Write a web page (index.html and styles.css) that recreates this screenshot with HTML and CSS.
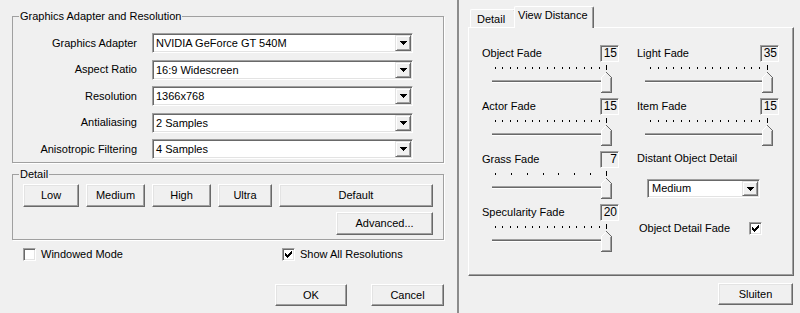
FILE: index.html
```html
<!DOCTYPE html>
<html lang="en">
<head>
<meta charset="utf-8">
<title>Graphics Settings</title>
<link rel="stylesheet" href="styles.css">
</head>
<body>
<svg class="defs" aria-hidden="true">
  <defs>
    <symbol id="thumb" viewBox="0 0 11 21">
      <path d="M0.5 5.5L5.5 0.5L10.5 5.5V20.5H0.5Z" fill="#f0f0f0"/>
      <path d="M0.5 20V5.5L5 1" stroke="#fff" fill="none"/>
      <path d="M5.5 0.5L10.5 5.5V20.5H0" stroke="#696969" fill="none"/>
      <path d="M9.5 6V19.5H1" stroke="#a0a0a0" fill="none"/>
    </symbol>
    <symbol id="arrow" viewBox="0 0 7 4">
      <path d="M0 0h7v1H0zM1 1h5v1H1zM2 2h3v1H2zM3 3h1v1H3z" fill="#000"/>
    </symbol>
    <symbol id="check" viewBox="0 0 7 7">
      <path d="M6 0h1v1H6zM5 1h2v1H5zM0 2h1v1H0zM4 2h3v1H4zM0 3h2v1H0zM3 3h3v1H3zM0 4h5v1H0zM1 5h3v1H1zM2 6h1v1H2z" fill="#000"/>
    </symbol>
  </defs>
</svg>

<div class="left">
  <fieldset class="group g1">
    <legend>Graphics Adapter and Resolution</legend>
    <div class="form">
      <span class="lbl">Graphics Adapter</span>
      <div class="combo"><span class="ctext">NVIDIA GeForce GT 540M</span><span class="drop"><svg width="7" height="4"><use href="#arrow"/></svg></span></div>
      <span class="lbl">Aspect Ratio</span>
      <div class="combo"><span class="ctext">16:9 Widescreen</span><span class="drop"><svg width="7" height="4"><use href="#arrow"/></svg></span></div>
      <span class="lbl">Resolution</span>
      <div class="combo"><span class="ctext">1366x768</span><span class="drop"><svg width="7" height="4"><use href="#arrow"/></svg></span></div>
      <span class="lbl">Antialiasing</span>
      <div class="combo"><span class="ctext">2 Samples</span><span class="drop"><svg width="7" height="4"><use href="#arrow"/></svg></span></div>
      <span class="lbl">Anisotropic Filtering</span>
      <div class="combo"><span class="ctext">4 Samples</span><span class="drop"><svg width="7" height="4"><use href="#arrow"/></svg></span></div>
    </div>
  </fieldset>

  <fieldset class="group g2">
    <legend>Detail</legend>
    <div class="presets">
      <button class="btn b-low">Low</button>
      <button class="btn b-med">Medium</button>
      <button class="btn b-high">High</button>
      <button class="btn b-ultra">Ultra</button>
      <button class="btn b-default">Default</button>
    </div>
    <div class="adv-row">
      <button class="btn b-adv">Advanced...</button>
    </div>
  </fieldset>

  <div class="checks">
    <label class="chk"><span class="box"></span>Windowed Mode</label>
    <label class="chk"><span class="box"><svg width="7" height="7"><use href="#check"/></svg></span>Show All Resolutions</label>
  </div>

  <div class="actions">
    <button class="btn b-ok">OK</button>
    <button class="btn b-cancel">Cancel</button>
  </div>
</div>

<div class="divider"></div>

<div class="right">
  <div class="tabs">
    <div class="tab">Detail</div>
    <div class="tab active">View Distance</div>
  </div>
  <div class="panel">
    <div class="col col-a">
      <div class="slider">
        <div class="shead"><span>Object Fade</span><span class="val">15</span></div>
        <svg class="sl" width="137" height="36">
          <path d="M13.5 5v2M20.5 5v2M28.5 5v2M35.5 5v2M43.5 5v2M50.5 5v2M57.5 5v2M65.5 5v2M72.5 5v2M80.5 5v2M87.5 5v2M94.5 5v2M102.5 5v2M109.5 5v2M117.5 5v2M124.5 3v5" stroke="#000"/>
          <rect x="10" y="18" width="118" height="1" fill="#a0a0a0"/><rect x="10" y="19" width="118" height="1" fill="#696969"/><rect x="10" y="20" width="118" height="1" fill="#fff"/>
          <use href="#thumb" x="119" y="10" width="11" height="21"/>
        </svg>
      </div>
      <div class="slider">
        <div class="shead"><span>Actor Fade</span><span class="val">15</span></div>
        <svg class="sl" width="137" height="36">
          <path d="M13.5 5v2M20.5 5v2M28.5 5v2M35.5 5v2M43.5 5v2M50.5 5v2M57.5 5v2M65.5 5v2M72.5 5v2M80.5 5v2M87.5 5v2M94.5 5v2M102.5 5v2M109.5 5v2M117.5 5v2M124.5 3v5" stroke="#000"/>
          <rect x="10" y="18" width="118" height="1" fill="#a0a0a0"/><rect x="10" y="19" width="118" height="1" fill="#696969"/><rect x="10" y="20" width="118" height="1" fill="#fff"/>
          <use href="#thumb" x="119" y="10" width="11" height="21"/>
        </svg>
      </div>
      <div class="slider">
        <div class="shead"><span>Grass Fade</span><span class="val">7</span></div>
        <svg class="sl" width="137" height="36">
          <path d="M13.5 5v2M29.5 5v2M45.5 5v2M61.5 5v2M76.5 5v2M92.5 5v2M108.5 5v2M124.5 3v5" stroke="#000"/>
          <rect x="10" y="18" width="118" height="1" fill="#a0a0a0"/><rect x="10" y="19" width="118" height="1" fill="#696969"/><rect x="10" y="20" width="118" height="1" fill="#fff"/>
          <use href="#thumb" x="119" y="10" width="11" height="21"/>
        </svg>
      </div>
      <div class="slider">
        <div class="shead"><span>Specularity Fade</span><span class="val">20</span></div>
        <svg class="sl" width="137" height="36">
          <path d="M13.5 5v2M20.5 5v2M28.5 5v2M35.5 5v2M43.5 5v2M50.5 5v2M57.5 5v2M65.5 5v2M72.5 5v2M80.5 5v2M87.5 5v2M94.5 5v2M102.5 5v2M109.5 5v2M117.5 5v2M124.5 3v5" stroke="#000"/>
          <rect x="10" y="18" width="118" height="1" fill="#a0a0a0"/><rect x="10" y="19" width="118" height="1" fill="#696969"/><rect x="10" y="20" width="118" height="1" fill="#fff"/>
          <use href="#thumb" x="119" y="10" width="11" height="21"/>
        </svg>
      </div>
    </div>

    <div class="col col-b">
      <div class="slider">
        <div class="shead"><span>Light Fade</span><span class="val">35</span></div>
        <svg class="sl" width="142" height="36">
          <path d="M13.5 5v2M21.5 5v2M29.5 5v2M36.5 5v2M44.5 5v2M52.5 5v2M60.5 5v2M68.5 5v2M75.5 5v2M83.5 5v2M91.5 5v2M99.5 5v2M107.5 5v2M114.5 5v2M122.5 5v2M130.5 3v5" stroke="#000"/>
          <rect x="8" y="18" width="126" height="1" fill="#a0a0a0"/><rect x="8" y="19" width="126" height="1" fill="#696969"/><rect x="8" y="20" width="126" height="1" fill="#fff"/>
          <use href="#thumb" x="125" y="10" width="11" height="21"/>
        </svg>
      </div>
      <div class="slider">
        <div class="shead"><span>Item Fade</span><span class="val">15</span></div>
        <svg class="sl" width="142" height="36">
          <path d="M13.5 5v2M21.5 5v2M29.5 5v2M36.5 5v2M44.5 5v2M52.5 5v2M60.5 5v2M68.5 5v2M75.5 5v2M83.5 5v2M91.5 5v2M99.5 5v2M107.5 5v2M114.5 5v2M122.5 5v2M130.5 3v5" stroke="#000"/>
          <rect x="8" y="18" width="126" height="1" fill="#a0a0a0"/><rect x="8" y="19" width="126" height="1" fill="#696969"/><rect x="8" y="20" width="126" height="1" fill="#fff"/>
          <use href="#thumb" x="125" y="10" width="11" height="21"/>
        </svg>
      </div>
      <div class="dod-label">Distant Object Detail</div>
      <div class="combo combo-small"><span class="ctext">Medium</span><span class="drop"><svg width="7" height="4"><use href="#arrow"/></svg></span></div>
      <label class="odf"><span>Object Detail Fade</span><span class="box"><svg width="7" height="7"><use href="#check"/></svg></span></label>
    </div>
  </div>
  <div class="footer">
    <button class="btn b-close">Sluiten</button>
  </div>
</div>
</body>
</html>
```

FILE: styles.css
```css
* { box-sizing: border-box; }

html, body { margin: 0; padding: 0; }

body {
  width: 800px;
  height: 313px;
  overflow: hidden;
  background: #f0f0f0;
  color: #000;
  font: 11px/13px "Liberation Sans", Arial, sans-serif;
  display: flex;
}

.defs { position: absolute; width: 0; height: 0; overflow: hidden; }

/* ---------- left dialog ---------- */
.left { width: 457px; flex: none; }

.divider {
  width: 2px;
  flex: none;
  background: #8c8c8c;
}

.group {
  margin: 10px 0 0 12px;
  width: 432px;
  min-inline-size: 0;
  padding: 0 0 0 6px;
  border: 1px solid #a0a0a0;
  box-shadow: 1px 1px 0 #fff;
}

.group legend {
  padding: 0 1px;
  height: 13px;
  line-height: 13px;
}

.g2 { margin-top: 5px; }

.form {
  display: grid;
  grid-template-columns: 118px 261px;
  column-gap: 15px;
  row-gap: 6.5px;
  grid-auto-rows: 20px;
  align-items: center;
  padding: 10px 0 3px 0;
}

.lbl { text-align: right; }

.combo {
  display: flex;
  align-items: stretch;
  height: 20px;
  background: #fff;
  border: 1px solid;
  border-color: #a0a0a0 #fff #fff #a0a0a0;
  box-shadow: inset 1px 1px 0 #696969, inset -1px -1px 0 #e3e3e3;
  padding: 1px;
}

.ctext {
  flex: 1;
  padding-left: 2px;
  line-height: 16px;
  white-space: nowrap;
  overflow: hidden;
}

.drop {
  width: 16px;
  flex: none;
  background: #f0f0f0;
  border: 1px solid;
  border-color: #e3e3e3 #696969 #696969 #e3e3e3;
  box-shadow: inset 1px 1px 0 #fff, inset -1px -1px 0 #a0a0a0;
  display: flex;
  align-items: center;
  justify-content: center;
}

.drop svg { display: block; shape-rendering: crispEdges; }

.btn {
  font: inherit;
  line-height: 13px;
  color: #000;
  background: #f0f0f0;
  height: 23px;
  padding: 0;
  border: 1px solid;
  border-color: #fff #696969 #696969 #fff;
  box-shadow: inset -1px -1px 0 #a0a0a0, inset 1px 1px 0 #e3e3e3;
}

.presets {
  display: flex;
  gap: 7px;
  padding: 3px 0 0 4px;
}

.b-low { width: 56px; }
.b-med { width: 59px; }
.b-high { width: 59px; }
.b-ultra { width: 54px; }
.b-default { width: 154px; }

.adv-row {
  display: flex;
  justify-content: flex-end;
  padding: 5px 10px 4px 0;
}

.b-adv { width: 97px; }

.checks {
  display: grid;
  grid-template-columns: 259px auto;
  padding-left: 23px;
  margin-top: 8px;
}

.chk {
  display: flex;
  align-items: center;
  gap: 5px;
  height: 13px;
}

.box {
  width: 13px;
  height: 13px;
  flex: none;
  background: #fff;
  border: 1px solid;
  border-color: #a0a0a0 #fff #fff #a0a0a0;
  box-shadow: inset 1px 1px 0 #696969, inset -1px -1px 0 #e3e3e3;
  display: flex;
  align-items: center;
  justify-content: center;
}

.box svg { display: block; shape-rendering: crispEdges; }

.actions {
  display: flex;
  justify-content: flex-end;
  gap: 24px;
  padding-right: 13px;
  margin-top: 23px;
}

.b-ok { width: 72px; height: 22px; }
.b-cancel { width: 73px; height: 22px; }

/* ---------- right dialog ---------- */
.right {
  flex: 1;
  padding-left: 9px;
}

.tabs {
  display: flex;
  align-items: flex-end;
  height: 21px;
  margin-top: 6px;
  padding-left: 2px;
}

.tab {
  background: #f0f0f0;
  border-top: 1px solid #fff;
  border-left: 1px solid #fff;
  border-right: 1px solid #696969;
  box-shadow: inset -1px 0 0 #a0a0a0;
  border-top-left-radius: 2px;
  border-top-right-radius: 2px;
  white-space: nowrap;
}

.tab:first-child {
  width: 46px;
  height: 18px;
  padding: 3px 0 0 6px;
}

.tab.active {
  position: relative;
  width: 80px;
  height: 22px;
  margin-left: -2px;
  margin-bottom: -1px;
  padding: 2px 0 0 3px;
}

.panel {
  width: 326px;
  height: 249px;
  border: 1px solid;
  border-color: #fff #696969 #696969 #fff;
  box-shadow: inset -1px -1px 0 #a0a0a0;
  padding: 17px 0 0 13px;
  display: flex;
  gap: 18px;
}

.col-a { width: 137px; }
.col-b { width: 142px; }

.slider { height: 53px; }

.shead {
  display: flex;
  justify-content: space-between;
  align-items: center;
  height: 17px;
}

.val {
  width: 19px;
  height: 17px;
  border: 1px solid;
  border-color: #a0a0a0 #fff #fff #a0a0a0;
  box-shadow: inset 1px 1px 0 #696969;
  text-align: right;
  padding-right: 1px;
  line-height: 15px;
  font-size: 12px;
}

.sl { display: block; shape-rendering: crispEdges; }

.dod-label {
  margin-top: 1px;
  height: 13px;
}

.combo-small {
  width: 113px;
  height: 19px;
  margin: 14px 0 0 10px;
}

.combo-small .ctext { line-height: 15px; padding-left: 3px; }

.odf {
  display: grid;
  grid-template-columns: 110px 13px;
  align-items: center;
  height: 13px;
  margin: 24px 0 0 2px;
}

.footer {
  width: 326px;
  display: flex;
  justify-content: flex-end;
  padding-right: 1px;
  margin-top: 7px;
}

.b-close { width: 75px; height: 22px; }
```
